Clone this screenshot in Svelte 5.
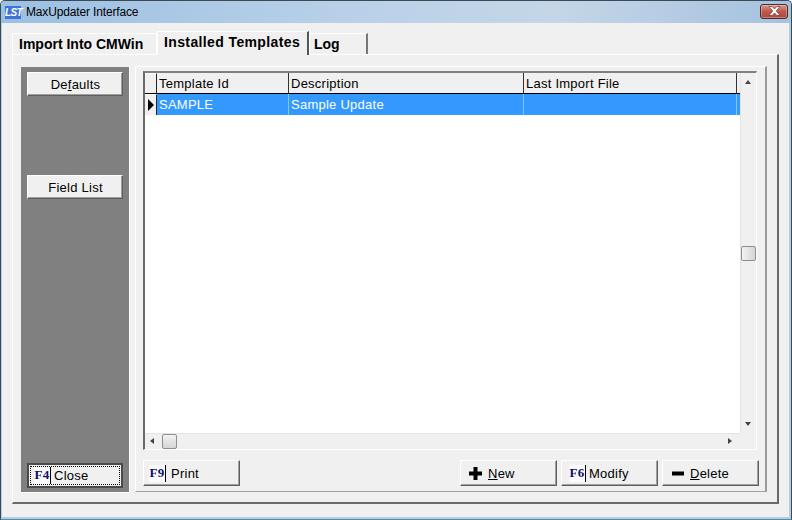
<script>
  const columns = [
    { label: 'Template Id', value: 'SAMPLE', width: 132 },
    { label: 'Description', value: 'Sample Update', width: 235 },
    { label: 'Last Import File', value: '', width: 213 }
  ];
</script>

<div class="window">
  <header class="titlebar">
    <span class="logo">LST</span>
    <span class="title">MaxUpdater Interface</span>
    <button class="close-x" aria-label="Close">
      <svg width="13" height="10" viewBox="0 0 13 10"><path d="M1 .5h3.200L6.500 3 8.800.5H12L8.300 5 12 9.500H8.800L6.500 7 4.200 9.500H1L4.700 5z" fill="#fff" stroke="#7a3028" stroke-width=".7"/></svg>
    </button>
  </header>

  <div class="client">
    <nav class="tabs">
      <div class="tab first">Import Into CMWin</div>
      <div class="tab active">Installed Templates</div>
      <div class="tab log">Log</div>
    </nav>

    <section class="sheet">
      <aside class="side">
        <button class="btn side-btn"><span>De<u>f</u>aults</span></button>
        <button class="btn side-btn field"><span>Field List</span></button>
        <div class="focus-wrap">
          <button class="btn focus-btn"><span class="dots"><span class="fkey">F4</span><span>Close</span></span></button>
        </div>
      </aside>

      <main class="group">
        <div class="gridbox">
          <div class="grid">
            <div class="row head">
              <div class="ind"></div>
              {#each columns as c}
                <div class="cell" style="width:{c.width}px">{c.label}</div>
              {/each}
              <div class="cell last"></div>
            </div>
            <div class="row sel">
              <div class="ind"><i></i></div>
              {#each columns as c}
                <div class="cell" style="width:{c.width}px">{c.value}</div>
              {/each}
              <div class="cell last"></div>
            </div>
          </div>
          <div class="vscroll">
            <i class="up"></i>
            <b class="thumb v"></b>
            <i class="down"></i>
          </div>
          <div class="hscroll">
            <i class="left"></i>
            <b class="thumb h"></b>
            <i class="right"></i>
          </div>
          <div class="corner"></div>
        </div>

        <div class="actions">
          <button class="btn act print"><span class="fkey">F9</span><span>Print</span></button>
          <div class="right-actions">
            <button class="btn act new">
              <svg width="13" height="13" viewBox="0 0 13 13"><path d="M4.500 0h4v4.500H13v4H8.500V13h-4V8.500H0v-4h4.500z" fill="#000"/></svg>
              <span><u>N</u>ew</span>
            </button>
            <button class="btn act"><span class="fkey">F6</span><span>Modify</span></button>
            <button class="btn act new del">
              <svg width="12" height="13" viewBox="0 0 12 13"><rect y="4.500" width="12" height="4" fill="#000"/></svg>
              <span><u>D</u>elete</span>
            </button>
          </div>
        </div>
      </main>
    </section>
  </div>
</div>

<style>
  :global(body) { margin: 0; background: #f0f0f0; }
  .window {
    width: 792px; height: 520px; box-sizing: border-box;
    display: flex; flex-direction: column; overflow: hidden;
    font-family: "Liberation Sans", Arial, sans-serif; color: #000;
    background: #b5cde3;
    border: 1px solid #3c4a55; border-bottom-color: #4d8fa8; border-radius: 5px 5px 0 0;
  }
  .titlebar {
    height: 22px; flex: none; display: flex; align-items: center;
    padding: 0 3px 0 4px; gap: 5px; box-sizing: border-box;
    background: linear-gradient(90deg, #9cc0e2 0%, #b9d1e8 45%, #c4d6e8 70%, #a5c2de 100%);
  }
  .logo {
    width: 16px; height: 13px; background: #3f73d8; color: #fff;
    font: italic bold 10px/13px "Liberation Sans", sans-serif; letter-spacing: -.6px; text-align: center;
  }
  .title { font-size: 12px; flex: 1; color: #000; letter-spacing: -.15px; }
  .close-x {
    width: 28px; height: 15px; padding: 0; display: flex; align-items: center; justify-content: center;
    border: 1px solid #4a2a2a; border-radius: 3px; margin-top: -2px;
    background: linear-gradient(#d89a8e, #c0584a 50%, #b0493c);
    box-shadow: inset 0 0 0 1px rgba(255,255,255,.3);
  }
  .client {
    flex: 1; min-height: 0; margin: 0 2px 2px 1px; background: #f0f0f0; padding: 9px 10px 13px 10px;
    display: flex; flex-direction: column;
  }
  .tabs { display: flex; height: 22px; flex: none; align-items: flex-end; position: relative; z-index: 1; }
  .tab {
    font-weight: bold; font-size: 14px; height: 21px; line-height: 20px; box-sizing: border-box;
    border-top: 1px solid #fff; border-left: 1px solid #fff;
  }
  .first { width: 145px; padding-left: 6px; border-right: 1px solid #fff; }
  .active {
    width: 152px; height: 24px; padding-left: 6px; margin-bottom: -1px;
    background: #f0f0f0; border-right: 2px solid #555; line-height: 21px; letter-spacing: .38px;
  }
  .log { width: 59px; padding-left: 4px; border-right: 2px solid #777; }
  .sheet {
    flex: 1; min-height: 0; box-sizing: border-box; display: flex; gap: 6px;
    border-top: 1px solid #fff; border-left: 1px solid #fff;
    border-right: 2px solid #6a6a6a; border-bottom: 2px solid #6a6a6a;
    padding: 11px 10px 10px 8px;
  }
  .side {
    width: 108px; flex: none; box-sizing: border-box; background: #808080; margin-top: 1px;
    box-shadow: 0 1px 0 #fff, 1px 0 0 #fff;
    padding: 5px 6px 4px 6px; display: flex; flex-direction: column;
  }
  .btn {
    font: 13px "Liberation Sans", Arial, sans-serif; letter-spacing: .25px; color: #000; background: #f0f0f0; padding: 0;
    border: 1px solid; border-color: #fff #5e5e5e #5e5e5e #fff; box-sizing: border-box;
    box-shadow: inset -1px -1px 0 #a0a0a0;
    display: flex; align-items: center;
  }
  .side-btn { width: 96px; height: 24px; justify-content: center; flex: none; padding-left: 1px; }
  .field { margin-top: 79px; }
  .focus-wrap { margin-top: auto; }
  .focus-btn {
    width: 96px; height: 25px; border: 2px solid #4a4a4a; padding: 1px;
    box-shadow: none; background: #f0f0f0;
  }
  .dots { flex: 1; height: 100%; border: 1px dotted #000; box-sizing: border-box; display: flex; align-items: center; gap: 3px; padding-left: 3px; }
  .fkey {
    font: bold 13px/16px "Liberation Serif", "DejaVu Serif", serif; color: #10106e; background: #fbfbff;
    width: 16px; height: 17px; text-align: center; border-right: 1px solid #000; flex: none; letter-spacing: .2px;
  }
  .group {
    flex: 1; min-width: 0; box-sizing: border-box; border-top: 1px solid #fff; border-left: 1px solid #fff;
    border-right: 2px solid #9a9a9a; border-bottom: 1px solid #a0a0a0;
    padding: 4px 7px 6px 7px; display: flex; flex-direction: column;
  }
  .gridbox {
    box-sizing: border-box; width: 614px; height: 379px; flex: none; display: grid; grid-template-columns: 1fr 16px; grid-template-rows: 1fr 16px;
    border-top: 2px solid #808080; border-left: 2px solid #6a6a6a; border-bottom: 1px solid #fff; border-right: 1px solid #fff;
  }
  .grid { background: #fff; overflow: hidden; }
  .row { display: flex; height: 21px; box-sizing: border-box; }
  .head { background: #f0f0f0; border-bottom: 1px solid #000; }
  .sel { background: #3399ff; color: #fff; }
  .ind {
    width: 12px; box-sizing: border-box; background: #f0f0f0; flex: none; border-right: 1px solid #222;
    border-top: 1px solid #fff; display: flex; align-items: center; padding-left: 3px;
  }
  .ind i { border-left: 6px solid #000; border-top: 6px solid transparent; border-bottom: 6px solid transparent; }
  .cell {
    font-size: 13px; letter-spacing: .25px; line-height: 22px; box-sizing: border-box; padding-left: 2px; white-space: nowrap; flex: none;
    border-right: 1px solid #333;
  }
  .sel .cell { border-right-color: #8ec4f5; }
  .last { width: 4px; padding: 0; border-right: 0 !important; }
  .vscroll { background: #f0f0f0; display: flex; flex-direction: column; position: relative; border-left: 1px solid #e4e4e4; box-sizing: border-box; }
  .hscroll { background: #f0f0f0; position: relative; border-top: 1px solid #e4e4e4; box-sizing: border-box; }
  .corner { background: #f0f0f0; }
  .thumb {
    position: absolute; box-sizing: border-box; width: 15px; height: 15px; border: 1px solid #8e8f8f; border-radius: 2px;
    background: linear-gradient(90deg, #f2f2f2, #d5d5d5);
  }
  .thumb.v { left: 0; top: 173px; }
  .thumb.h { left: 17px; top: 0; background: linear-gradient(#f2f2f2, #d5d5d5); }
  .up, .down, .left, .right { position: absolute; width: 0; height: 0; }
  .up { left: 4px; top: 7px; border: 3.500px solid transparent; border-top: 0; border-bottom: 4px solid #444; }
  .down { left: 4px; bottom: 7px; border: 3.500px solid transparent; border-bottom: 0; border-top: 4px solid #444; }
  .left { left: 5px; top: 4px; border: 3.500px solid transparent; border-left: 0; border-right: 4px solid #444; }
  .right { right: 8px; top: 4px; border: 3.500px solid transparent; border-right: 0; border-left: 4px solid #444; }
  .actions { display: flex; justify-content: space-between; margin-top: 10px; }
  .right-actions { display: flex; gap: 4px; margin-right: -1px; }
  .act { width: 97px; height: 26px; padding-left: 7px; gap: 3px; }
  .print { padding-left: 5px; gap: 5px; }
  .new { padding-left: 8px; gap: 6px; }
  .del { padding-left: 9px; }
</style>
